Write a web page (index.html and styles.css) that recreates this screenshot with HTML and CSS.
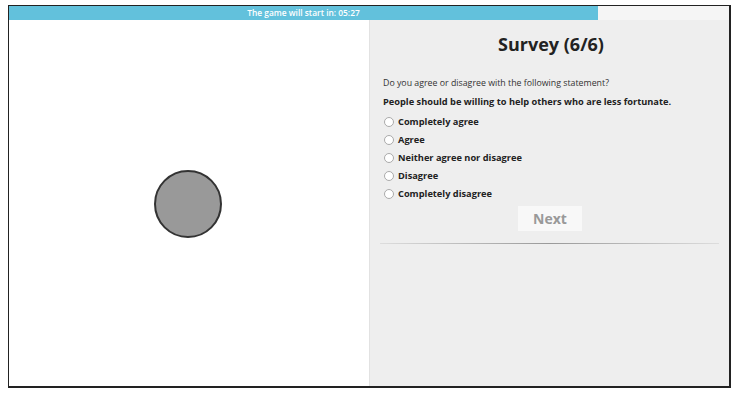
FILE: index.html
```html
<!DOCTYPE html>
<html>
<head>
<meta charset="utf-8">
<link rel="stylesheet" href="styles.css">
</head>
<body>
<div class="frame">
  <div class="progress">
    <div class="progress-fill" style="width:81.8%">The game will start in: 05:27</div>
  </div>
  <div class="panels">
    <div class="stage">
      <div class="dot"></div>
    </div>
    <div class="survey">
      <h1 class="title">Survey (6/6)</h1>
      <p class="question">Do you agree or disagree with the following statement?</p>
      <p class="statement">People should be willing to help others who are less fortunate.</p>
      <ul class="options">
        <li class="option"><span class="radio"></span>Completely agree</li>
        <li class="option"><span class="radio"></span>Agree</li>
        <li class="option"><span class="radio"></span>Neither agree nor disagree</li>
        <li class="option"><span class="radio"></span>Disagree</li>
        <li class="option"><span class="radio"></span>Completely disagree</li>
      </ul>
      <div class="actions"><button class="next">Next</button></div>
      <hr class="divider">
    </div>
  </div>
</div>
</body>
</html>
```
FILE: styles.css
```css
html, body { margin: 0; padding: 0; background: #fff; }
body { font-family: "Open Sans", "Liberation Sans", sans-serif; }
.frame {
  margin: 5px 0 0 8px;
  width: 720px;
  height: 380px;
  border: 1px solid #222;
  border-width: 1px 2px 2px 1px;
  display: flex;
  flex-direction: column;
}
.progress {
  height: 14px;
  background: #f5f5f5;
  display: flex;
}
.progress-fill {
  background: #62c1dc;
  color: #fff;
  font-size: 8.4px;
  font-weight: 600;
  line-height: 14px;
  text-align: center;
  white-space: nowrap;
}
.panels { flex: 1; display: flex; }
.stage {
  width: 360px;
  background: #fff;
  border-right: 1px solid #e2e2e2;
  display: flex;
  align-items: center;
  justify-content: center;
}
.dot {
  width: 64px; height: 64px;
  border-radius: 50%;
  background: #999;
  border: 2px solid #333;
  margin-top: 2px;
  margin-left: -2px;
}
.survey {
  flex: 1;
  background: #eee;
  padding: 0 10px 0 13px;
  color: #222;
}
.title {
  margin: 12px 0 0;
  text-align: center;
  font-size: 18px;
  font-weight: 700;
  line-height: 24px;
  color: #222;
}
.question { margin: 18px 0 0; font-size: 8.8px; line-height: 18px; color: #333; }
.statement { margin: 1px 0 0; font-size: 9.25px; font-weight: 700; line-height: 18px; }
.options { list-style: none; margin: 2px 0 0; padding: 0; }
.option {
  display: flex; align-items: center;
  font-size: 9.25px; font-weight: 700; line-height: 18px;
}
.radio {
  width: 8px; height: 8px;
  border-radius: 50%;
  border: 1px solid #aaa;
  background: #fff;
  margin: 0 4px 0 1px;
}
.actions { display: flex; justify-content: center; margin-top: 3px; }
.next {
  font-family: inherit;
  font-size: 14px; font-weight: 700;
  color: #999;
  background: #f8f8f8;
  border: none;
  width: 64px; height: 25px;
  padding: 0;
  margin-left: -2px;
}
.divider {
  margin: 12px 0 0 -3px;
  border: none;
  height: 1px;
  background: linear-gradient(to right, #ddd, #999 50%, #ddd);
}
```
